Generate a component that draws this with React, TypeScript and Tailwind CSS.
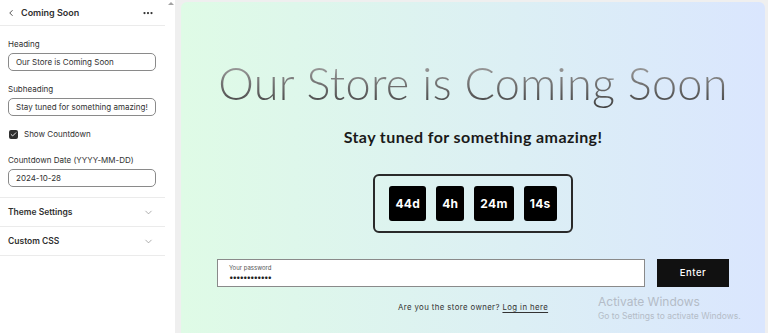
import { ChevronLeft, ChevronDown, MoreHorizontal, Check } from "lucide-react";

const FONT = { fontFamily: "Inter, 'Liberation Sans', sans-serif" };
const DISPLAY = { fontFamily: "Lato, Inter, sans-serif" };

function Field({ label, value, top }: { label: string; value: string; top: string }) {
  return (
    <div className={`px-2 ${top}`}>
      <div className="text-[8px] leading-[12px] text-[#303030]">{label}</div>
      <div className="mt-[3px] flex h-[18px] w-[148px] items-center whitespace-nowrap rounded-[5px] border border-[#8a8a8a] px-[7px] text-[8px] text-[#303030]">
        {value}
      </div>
    </div>
  );
}

function Section({ title }: { title: string }) {
  return (
    <div className="flex h-[29px] items-center justify-between border-b border-[#ebebeb] px-2">
      <span className="text-[8.5px] font-semibold text-[#303030]">{title}</span>
      <ChevronDown size={11} strokeWidth={1.5} className="mr-[3px] text-[#8a8a8a]" />
    </div>
  );
}

function Sidebar() {
  return (
    <div className="flex w-[175px] shrink-0 bg-white">
      <div className="w-[165px]">
        <div className="flex h-[26px] items-center justify-between border-b border-[#ebebeb] pl-[6px] pr-[11px]">
          <div className="flex items-center gap-[5px]">
            <ChevronLeft size={10} strokeWidth={2} className="text-[#303030]" />
            <span className="text-[9px] font-semibold text-[#303030]">Coming Soon</span>
          </div>
          <MoreHorizontal size={12} strokeWidth={2.5} className="text-[#303030]" />
        </div>
        <Field top="pt-[12px]" label="Heading" value="Our Store is Coming Soon" />
        <Field top="pt-[12px]" label="Subheading" value="Stay tuned for something amazing!" />
        <div className="flex items-center gap-[6px] px-[9px] pt-[14px]">
          <div className="flex h-[9px] w-[9px] items-center justify-center rounded-[2px] bg-[#303030]">
            <Check size={7} strokeWidth={3} className="text-white" />
          </div>
          <span className="text-[8px] leading-[9px] text-[#303030]">Show Countdown</span>
        </div>
        <Field top="pt-[15px]" label="Countdown Date (YYYY-MM-DD)" value="2024-10-28" />
        <div className="mt-[10px] border-t border-[#ebebeb]" />
        <Section title="Theme Settings" />
        <Section title="Custom CSS" />
      </div>
      <div className="relative w-[10px]">
        <div className="absolute left-[3px] top-[2px] h-0 w-0 border-x-[3px] border-b-[3px] border-x-transparent border-b-[#a3a3a3]" />
      </div>
    </div>
  );
}

function TimeBox({ text }: { text: string }) {
  return (
    <div className="flex h-[35px] items-center justify-center rounded-[3px] bg-black px-[6px] text-[12px] font-bold tracking-[0.3px] text-white">
      {text}
    </div>
  );
}

function Preview() {
  return (
    <div className="relative mt-[2px] flex flex-1 flex-col items-center rounded-t-[6px] bg-gradient-to-r from-[#dffbe6] to-[#dae6fe]">
      <h1
        style={DISPLAY}
        className="mt-[53px] bg-gradient-to-b from-[#b5b5b5] to-[#3a3a3a] bg-clip-text text-[45px] font-light leading-[56px] tracking-[0.3px] text-transparent"
      >
        Our Store is Coming Soon
      </h1>
      <p style={DISPLAY} className="mt-[14px] text-[16px] font-bold tracking-[0.4px] text-[#1a1a1a]">
        Stay tuned for something amazing!
      </p>
      <div className="mt-[25px] flex gap-[10px] rounded-[6px] border-2 border-[#2a2a2a] px-[14px] py-[10px]">
        <TimeBox text="44d" />
        <TimeBox text="4h" />
        <TimeBox text="24m" />
        <TimeBox text="14s" />
      </div>
      <div className="mt-[26px] flex items-center gap-[12px]">
        <div className="flex h-[28px] w-[428px] flex-col justify-center border border-[#8a8a8a] bg-white px-[11px]">
          <span className="text-[6px] leading-[8px] text-[#555]">Your password</span>
          <span className="text-[8px] leading-[10px] tracking-[-1px] text-[#222]">••••••••••••</span>
        </div>
        <div className="flex h-[28px] w-[72px] items-center justify-center bg-[#111] text-[9.5px] font-medium tracking-[0.5px] text-white">
          Enter
        </div>
      </div>
      <p className="mt-[15px] text-[7.8px] tracking-[0.4px] text-[#333]">
        Are you the store owner?{" "}
        <span className="underline underline-offset-2">Log in here</span>
      </p>
      <div className="absolute left-[417px] top-[292px] text-[#b4bcc7]">
        <div className="text-[12px] leading-[16px]">Activate Windows</div>
        <div className="text-[8.5px] leading-[12px]">Go to Settings to activate Windows.</div>
      </div>
    </div>
  );
}

export default function App() {
  return (
    <div style={FONT} className="flex h-[333px] w-[768px] overflow-hidden bg-[#efefef]">
      <Sidebar />
      <div className="flex flex-1 pl-[6px] pr-[3px]">
        <Preview />
      </div>
    </div>
  );
}
